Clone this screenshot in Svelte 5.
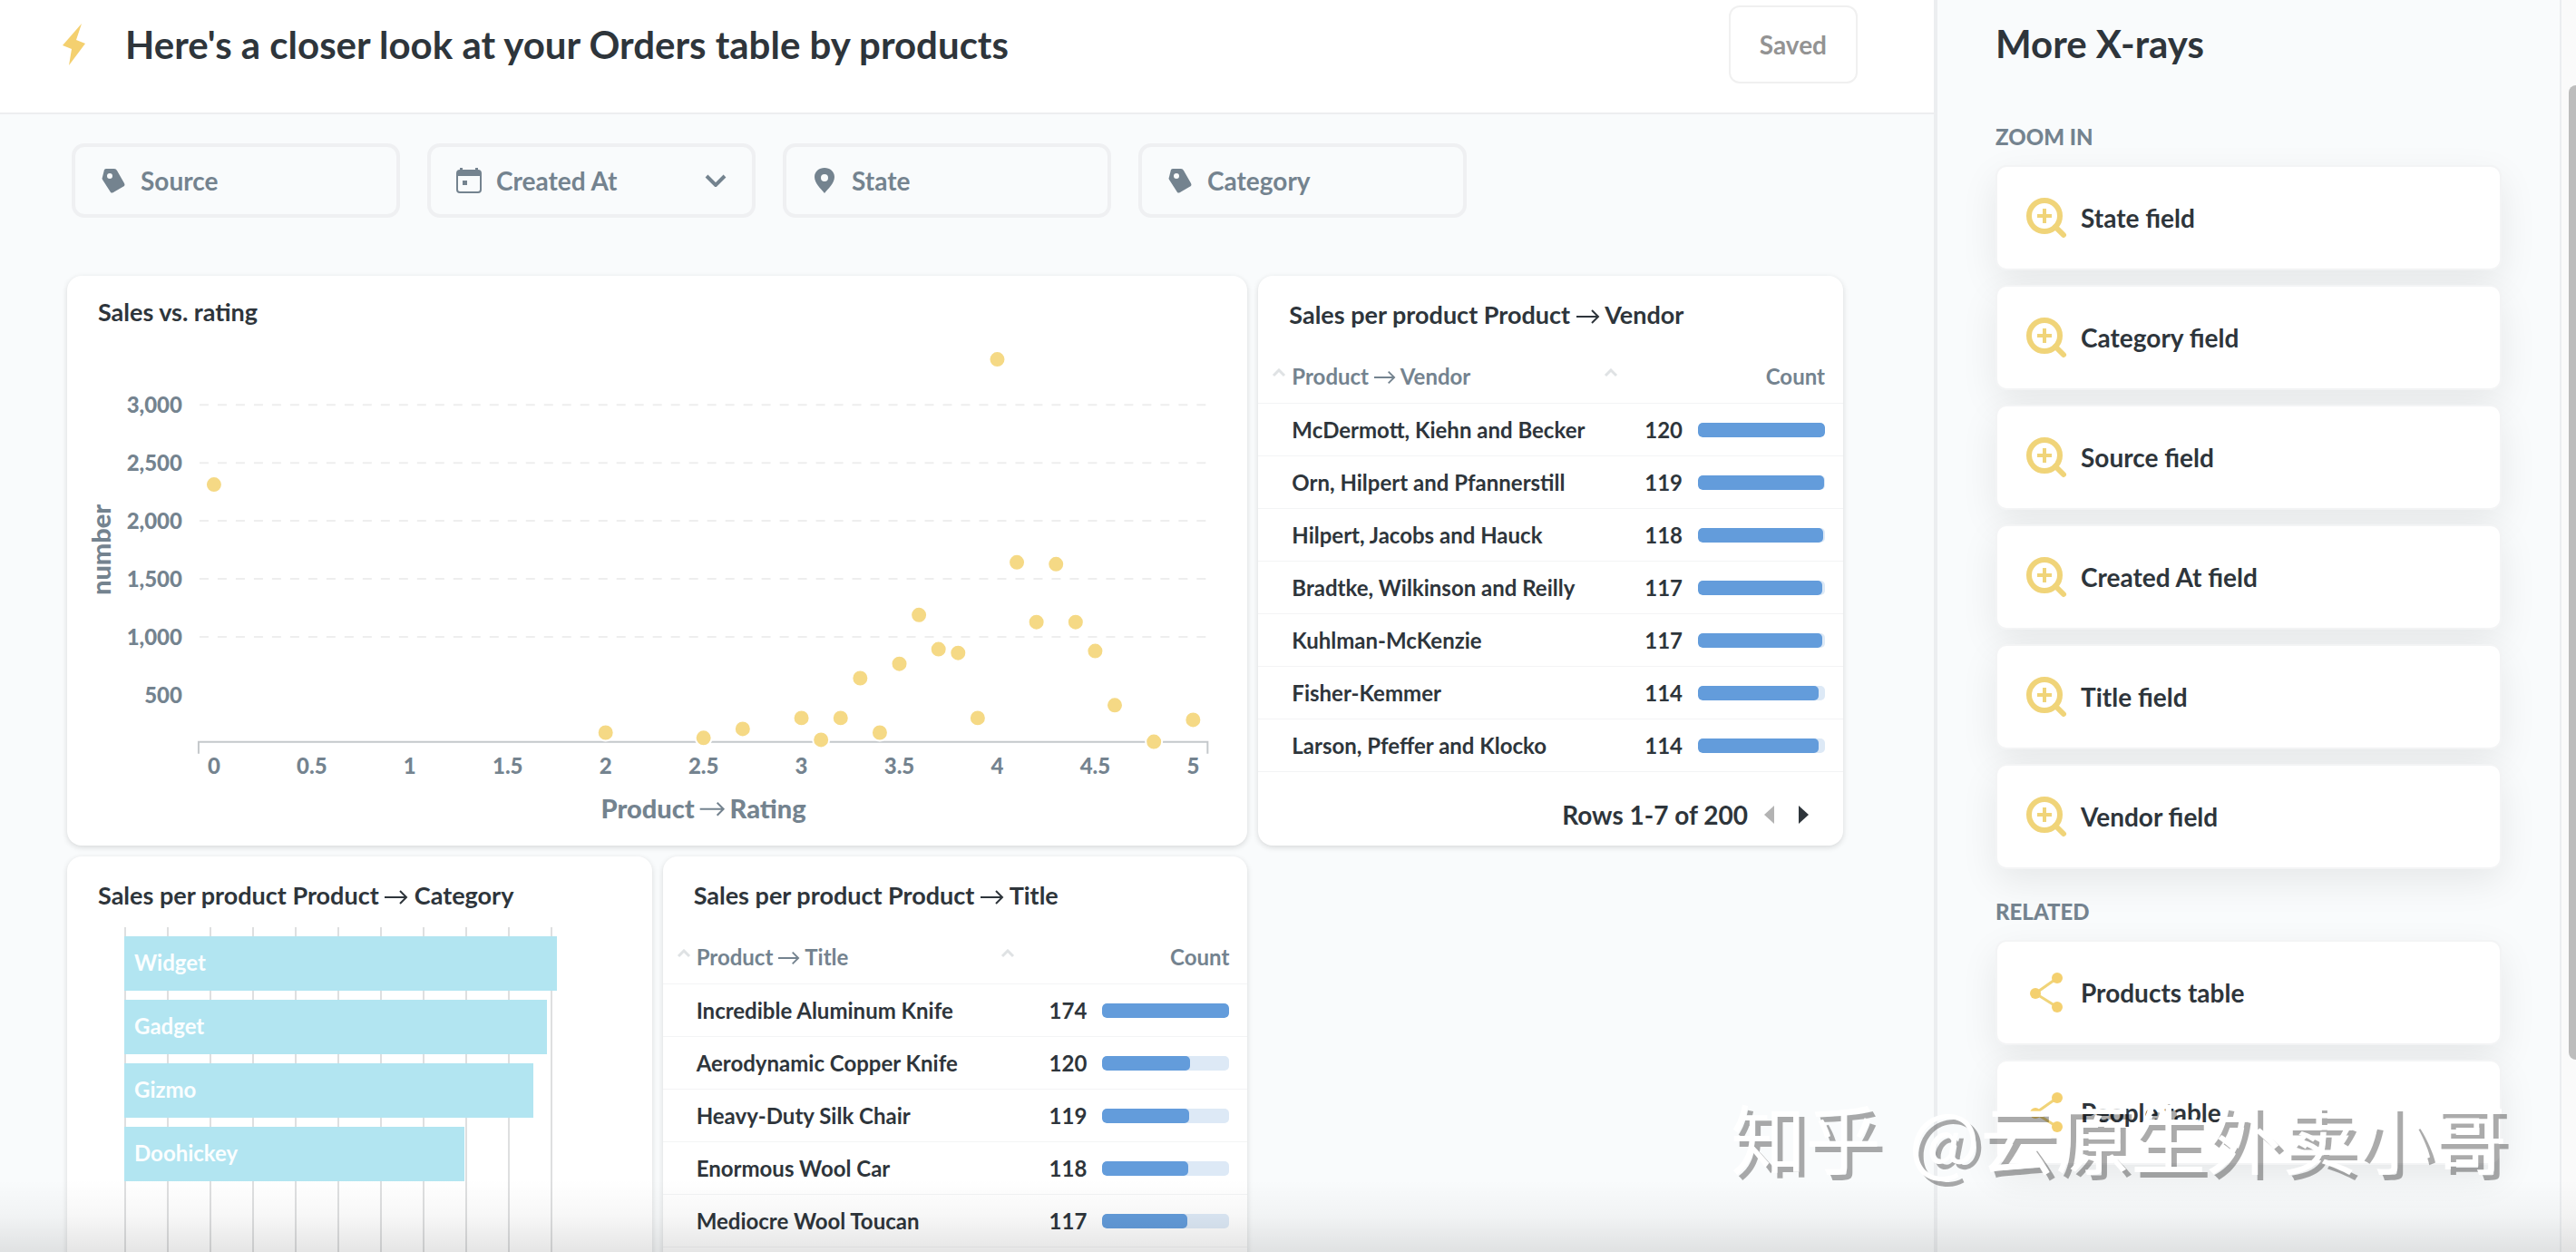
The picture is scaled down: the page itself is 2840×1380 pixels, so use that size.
<script>
  const filters = [
    { label: 'Source', icon: 'tag' },
    { label: 'Created At', icon: 'calendar', menu: true },
    { label: 'State', icon: 'pin' },
    { label: 'Category', icon: 'tag' }
  ];

  const points = [
    [0, 2313], [2, 174], [2.5, 128], [2.7, 206], [3, 300], [3.1, 112], [3.2, 300], [3.3, 643],
    [3.4, 174], [3.5, 767], [3.6, 1188], [3.7, 893], [3.8, 861], [3.9, 300], [4, 3392],
    [4.1, 1642], [4.2, 1127], [4.3, 1626], [4.4, 1127], [4.5, 877], [4.6, 410], [4.8, 95], [5, 284]
  ];
  const yTicks = [3000, 2500, 2000, 1500, 1000, 500];
  const xTicks = [0, 0.5, 1, 1.5, 2, 2.5, 3, 3.5, 4, 4.5, 5];
  const px = (v) => 162 + v * 216;
  const py = (v) => 526 - v * 0.1279;

  const vendors = [
    ['McDermott, Kiehn and Becker', 120],
    ['Orn, Hilpert and Pfannerstill', 119],
    ['Hilpert, Jacobs and Hauck', 118],
    ['Bradtke, Wilkinson and Reilly', 117],
    ['Kuhlman-McKenzie', 117],
    ['Fisher-Kemmer', 114],
    ['Larson, Pfeffer and Klocko', 114]
  ];
  const titles = [
    ['Incredible Aluminum Knife', 174],
    ['Aerodynamic Copper Knife', 120],
    ['Heavy-Duty Silk Chair', 119],
    ['Enormous Wool Car', 118],
    ['Mediocre Wool Toucan', 117]
  ];
  const categories = [
    ['Widget', 5060], ['Gadget', 4940], ['Gizmo', 4784], ['Doohickey', 3976]
  ];

  const zoomIn = ['State', 'Category', 'Source', 'Created At', 'Title', 'Vendor'].map((n) => n + ' field');
  const related = ['Products table', 'People table'];
</script>

{#snippet arrow()}<svg class="arrow" viewBox="0 0 26 16" aria-label="to"><path d="M0 8H24M17 1L24 8L17 15" /></svg>{/snippet}

{#snippet caret()}<svg class="caret" viewBox="0 0 16 10" aria-hidden="true"><path d="M2 8L8 2L14 8" /></svg>{/snippet}

{#snippet countTable(field, rows)}
  <table>
    <thead>
      <tr>
        <th scope="col"><button class="sort">{@render caret()}<span>Product {@render arrow()} {field}</span></button></th>
        <th scope="col"><button class="sort end">{@render caret()}<span>Count</span></button></th>
      </tr>
    </thead>
    <tbody>
      {#each rows as [name, count]}
        <tr>
          <td>{name}</td>
          <td>
            <div class="count">
              {count}
              <div class="track"><div class="fill" style="width: {(count / rows[0][1]) * 100}%"></div></div>
            </div>
          </td>
        </tr>
      {/each}
    </tbody>
  </table>
{/snippet}

<div class="page">
  <main>
    <header>
      <svg class="bolt" viewBox="0 0 26 48" aria-hidden="true"><path d="M21 1L0 25L10 29L7 47L25 23L15 19Z" /></svg>
      <h1>Here's a closer look at your Orders table by products</h1>
      <button class="saved" disabled>Saved</button>
    </header>

    <div class="filters">
      {#each filters as f}
        <button class="filter">
          {#if f.icon === 'tag'}
            <svg class="ficon" viewBox="0 0 28 28"><path fill-rule="evenodd" d="M6 1H15Q17 1 18 3L26 17Q27 19 26 20L14 27Q12 28 11 27L2 13Q1 12 2 10L4 2Q5 1 6 1ZM10 6A3 3 0 1 0 10 12A3 3 0 1 0 10 6Z" /></svg>
          {:else if f.icon === 'calendar'}
            <svg class="ficon" viewBox="0 0 28 28"><path fill-rule="evenodd" d="M4 0H7V2H21V0H24V2Q28 2 28 6V24Q28 28 24 28H4Q0 28 0 24V6Q0 2 4 2ZM2 9V24Q2 26 4 26H24Q26 26 26 24V9ZM7 14H12V19H7Z" /></svg>
          {:else}
            <svg class="ficon" viewBox="0 0 28 28"><path fill-rule="evenodd" d="M14 0C20 0 25 4 25 10C25 17 18 23 14 28C10 23 3 17 3 10C3 4 8 0 14 0ZM14 7A4 4 0 1 0 14 15A4 4 0 1 0 14 7Z" /></svg>
          {/if}
          <span>{f.label}</span>
          {#if f.menu}<svg class="chevron" viewBox="0 0 24 14"><path d="M2 2L12 12L22 2" /></svg>{/if}
        </button>
      {/each}
    </div>

    <div class="dashboard">
      <section class="card wide">
        <svg class="scatter" viewBox="0 0 1302 628" role="img" aria-label="Sales vs. rating">
          <text class="name" x="34" y="50">Sales vs. rating</text>
          <text class="axis-title" transform="translate(48 302) rotate(-90)">number</text>
          {#each yTicks as t}
            <text class="tick y" x="127" y={py(t) + 9}>{t.toLocaleString('en-US')}</text>
            {#if t > 500}<line class="grid" x1="146" x2="1258" y1={py(t)} y2={py(t)} />{/if}
          {/each}
          <path class="axis" d="M145 527V514H1258V527" />
          {#each xTicks as t}<text class="tick" x={px(t)} y="549">{t}</text>{/each}
          {#each points as [x, y]}<circle cx={px(x)} cy={py(y)} r="9" />{/each}
          <text class="axis-title y" x="692" y="598">Product</text>
          <path class="axis-arrow" d="M698 588H724M717 581L724 588L717 595" />
          <text class="axis-title from" x="731" y="598">Rating</text>
        </svg>
      </section>

      <section class="card vendor">
        <h2>Sales per product Product {@render arrow()} Vendor</h2>
        {@render countTable('Vendor', vendors)}
        <div class="pager">
          <span>Rows 1-7 of 200</span>
          <button aria-label="Previous rows" disabled><svg viewBox="0 0 11 20"><path d="M11 0L0 10L11 20Z" /></svg></button>
          <button aria-label="Next rows"><svg viewBox="0 0 11 20"><path d="M0 0L11 10L0 20Z" /></svg></button>
        </div>
      </section>

      <section class="card">
        <h2>Sales per product Product {@render arrow()} Category</h2>
        <div class="bars">
          {#each categories as [name, v]}
            <div class="bar" style="width: {v / 50}%">{name}</div>
          {/each}
        </div>
      </section>

      <section class="card title">
        <h2>Sales per product Product {@render arrow()} Title</h2>
        {@render countTable('Title', titles)}
      </section>
    </div>
  </main>

  <aside>
    <h1>More X-rays</h1>
    <h3>ZOOM IN</h3>
    <nav>
      {#each zoomIn as label}
        <a href="#xray">
          <svg viewBox="0 0 44 44"><circle cx="20" cy="20" r="17" /><path d="M32 32L41 41" stroke-linecap="round" /><path class="plus" d="M12 20H28M20 12V28" /></svg>
          {label}
        </a>
      {/each}
    </nav>
    <h3>RELATED</h3>
    <nav>
      {#each related as label}
        <a href="#xray">
          <svg class="share" viewBox="0 0 44 44"><path d="M34 6L10 23L34 38" /><circle cx="34" cy="6" r="6" /><circle cx="10" cy="23" r="6" /><circle cx="34" cy="38" r="6" /></svg>
          {label}
        </a>
      {/each}
    </nav>
  </aside>

  <div class="scrollbar"><div class="thumb"></div></div>
  <div class="shade"></div>
  <div class="watermark">知乎 <span>@云原生外卖小哥</span></div>
</div>

<style>
  :global(body) {
    overflow: hidden;
    background: #f9fbfc;
  }
  .page {
    display: grid;
    grid-template-columns: 1fr 692px 16px;
    height: 100vh;
    overflow: hidden;
    position: relative;
    font-family: Lato, "Noto Sans CJK SC", sans-serif;
    font-weight: 700;
    color: #2e353b;
    background: #f9fbfc;
  }
  h1, h2, h3 { margin: 0; font-weight: 700; }
  button {
    font: inherit;
    color: inherit;
    background: none;
    border: 0;
    padding: 0;
  }
  main { min-width: 0; overflow: hidden; }

  header {
    display: flex;
    align-items: center;
    box-sizing: border-box;
    height: 126px;
    padding: 0 84px 26px 69px;
    background: #fff;
    border-bottom: 2px solid #edeef0;
  }
  .bolt { width: 26px; height: 48px; fill: #f4d06f; }
  h1 { font-size: 42px; line-height: 52px; }
  header h1 { flex: 1; margin-left: 43px; }
  .saved {
    height: 86px;
    padding: 0 32px;
    font-size: 28px;
    color: #939393;
    border: 2px solid #f0f0f0;
    border-radius: 12px;
  }

  .filters { display: flex; gap: 30px; padding: 32px 79px 0; }
  .filter {
    display: flex;
    align-items: center;
    box-sizing: border-box;
    width: 362px;
    height: 82px;
    padding: 0 28px;
    font-size: 28px;
    color: #74838f;
    border: 4px solid #eff0f2;
    border-radius: 14px;
  }
  .filter span { flex: 1; margin-left: 16px; text-align: left; }
  .ficon { width: 28px; height: 28px; fill: #74838f; }
  .chevron { width: 24px; height: 14px; fill: none; stroke: #74838f; stroke-width: 4; }

  .dashboard {
    display: grid;
    grid-template-columns: repeat(3, 1fr);
    grid-auto-rows: 628px;
    gap: 12px;
    padding: 64px 100px 0 74px;
  }
  .card {
    display: flex;
    flex-direction: column;
    background: #fff;
    border-radius: 16px;
    box-shadow: 0 2px 6px rgba(0, 0, 0, 0.14);
    overflow: hidden;
  }
  .wide { grid-column: span 2; }
  h2 { padding: 26px 34px 0; font-size: 27px; line-height: 34px; }
  .arrow {
    width: 26px;
    height: 16px;
    fill: none;
    stroke: currentColor;
    stroke-width: 2;
  }

  .scatter { display: block; width: 100%; }
  text { font-size: 27px; fill: #74838f; text-anchor: middle; }
  .name { fill: #2e353b; text-anchor: start; }
  .tick { font-size: 24px; font-weight: 900; }
  .y { text-anchor: end; }
  .from { text-anchor: start; }
  .axis-title { font-size: 29px; font-weight: 900; }
  .grid { stroke: #eee; stroke-width: 2; stroke-dasharray: 10 10; }
  .axis { fill: none; stroke: #c4c8cb; stroke-width: 2; }
  .axis-arrow { fill: none; stroke: #74838f; stroke-width: 2; }
  circle { fill: #f5d985; stroke: #fff; stroke-width: 2; }

  table {
    width: 100%;
    margin-top: 18px;
    border-collapse: collapse;
    table-layout: fixed;
    font-size: 24px;
  }
  th, td { height: 57px; padding: 0; text-align: left; border-bottom: 1px solid #f3f4f5; }
  th { height: 60px; padding-top: 2px; color: #74838f; }
  th:last-child { width: 272px; }
  .title th:last-child { width: 280px; }
  td:first-child { padding-left: 37px; }
  .sort { display: flex; align-items: center; width: 100%; gap: 6px; padding-left: 15px; }
  .sort .arrow { width: 24px; }
  .end { padding: 0 20px 0 8px; justify-content: space-between; }
  .caret { width: 16px; height: 10px; fill: none; stroke: #dfe2e4; stroke-width: 3; margin-top: -6px; }
  .count { display: flex; align-items: center; justify-content: flex-end; gap: 17px; padding-right: 20px; }
  .track { width: 140px; height: 16px; border-radius: 5px; background: #dde9f6; overflow: hidden; }
  .fill { height: 100%; border-radius: 5px; background: #639cdb; }

  .pager {
    display: flex;
    align-items: center;
    justify-content: flex-end;
    padding: 28px 38px 0 0;
    font-size: 28px;
    line-height: 38px;
  }
  .pager button { display: flex; margin-left: 18px; }
  .pager button + button { margin-left: 27px; }
  .pager svg { width: 11px; height: 20px; fill: #2e353b; }
  .pager button:disabled svg { fill: #b3b3b3; }

  .bars {
    display: flex;
    flex: 1;
    flex-direction: column;
    gap: 10px;
    margin: 18px 110px 0 63px;
    padding-top: 10px;
    background: repeating-linear-gradient(to right, #dedfe0 0 2px, transparent 2px 47px);
  }
  .bar {
    box-sizing: border-box;
    height: 60px;
    padding-left: 11px;
    font-size: 24px;
    line-height: 58px;
    color: #fbfeff;
    background: #b2e5f1;
  }

  aside {
    box-sizing: border-box;
    padding: 22px 64px 0;
    border: solid #eceef0;
    border-width: 0 2px 0 4px;
  }
  h3 { margin: 61px 0 0; font-size: 24px; line-height: 32px; font-weight: 900; color: #74838f; }
  nav { display: grid; gap: 16px; margin-top: 15px; }
  nav + h3 { margin-top: 31px; }
  nav a {
    display: flex;
    align-items: center;
    gap: 16px;
    height: 112px;
    padding-left: 32px;
    font-size: 28px;
    color: inherit;
    text-decoration: none;
    background: #fff;
    border: 2px solid #f3f4f5;
    border-radius: 12px;
    box-shadow: 0 14px 40px rgba(0, 0, 0, 0.08);
  }
  nav svg { width: 44px; height: 44px; overflow: visible; }
  nav path, nav circle { fill: none; stroke: #f0d479; stroke-width: 6; }
  nav .plus { stroke-width: 4; }
  nav .share path { stroke-width: 3; }
  nav .share circle { fill: #f4d06f; stroke: none; }

  .scrollbar { padding: 94px 0 0 8px; background: #fafafa; }
  .thumb { height: 1074px; border-radius: 8px 0 0 8px; background: #bdbdbd; }

  .shade {
    position: absolute;
    left: 0;
    right: 0;
    bottom: 0;
    height: 80px;
    background: linear-gradient(to bottom, transparent, rgba(0, 0, 0, 0.03) 50%, rgba(0, 0, 0, 0.1));
  }
  .watermark {
    position: absolute;
    right: 76px;
    bottom: 66px;
    font-family: "Noto Sans CJK SC", sans-serif;
    font-size: 83px;
    line-height: 124px;
    font-weight: 400;
    white-space: nowrap;
    color: #fff;
    text-shadow: 6px 6px 0 rgba(0, 0, 0, 0.33);
  }
  .watermark span { margin-left: 12px; }
</style>
